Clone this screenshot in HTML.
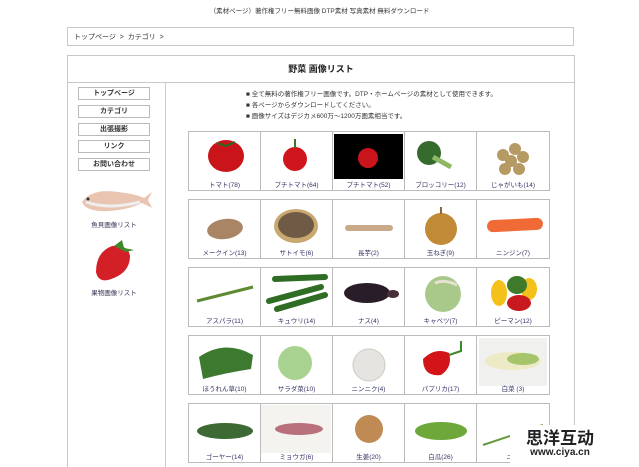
<!DOCTYPE html>
<html><head><meta charset="utf-8"><style>
*{margin:0;padding:0;box-sizing:border-box}
html,body{width:639px;height:467px;overflow:hidden}
body{background:#fff;position:relative;font-family:"Liberation Sans","Noto Sans CJK JP",sans-serif;color:#222}
.a{position:absolute}
.top{left:0;width:639px;top:5px;text-align:center;font-size:6.5px;color:#333}
.bc{left:67px;top:27px;width:507px;height:19px;border:1px solid #c8c8c8;font-size:7px;color:#333;padding:4px 0 0 6px}
.main{left:67px;top:55px;width:508px;height:420px;border:1px solid #c8c8c8}
.title{left:67px;top:55px;width:508px;height:28px;border-bottom:1px solid #c8c8c8;text-align:center;font-size:9px;font-weight:bold;line-height:28px}
.sep{left:165px;top:83px;width:1px;height:390px;background:#ccc}
.btn{left:78px;width:72px;height:13px;border:1px solid #bbb;font-size:7px;font-weight:bold;text-align:center;line-height:11px;color:#333}
.side{font-size:6.5px;color:#335;text-align:center;width:90px;left:69px}
.info{left:246px;font-size:6.5px;color:#333}
.tbl{left:188px;width:362px;height:60px;border:1px solid #bbb}
.c{position:absolute;top:0;height:58px;border-right:1px solid #bbb}
.c svg{position:absolute;left:0;top:1px}
.c span{position:absolute;bottom:1px;left:0;width:100%;text-align:center;font-size:6.5px;color:#336}
.wm{left:510px;top:425px;width:100px;height:42px;background:#fff}
</style></head><body>
<div class="a top">（素材ページ）著作権フリー無料画像 DTP素材 写真素材 無料ダウンロード</div>
<div class="a bc">トップページ &nbsp;&gt;&nbsp; カテゴリ &nbsp;&gt;</div>
<div class="a main"></div>
<div class="a title">野菜 画像リスト</div>
<div class="a sep"></div>
<div class="a btn" style="top:87px">トップページ</div>
<div class="a btn" style="top:105px">カテゴリ</div>
<div class="a btn" style="top:123px">出張撮影</div>
<div class="a btn" style="top:140px">リンク</div>
<div class="a btn" style="top:158px">お問い合わせ</div>
<svg class="a" style="left:78px;top:180px" width="76" height="40"><path d="M4 22 Q14 8 40 12 Q58 14 66 18 L74 12 L70 20 L74 28 L64 23 Q50 30 30 31 Q8 32 4 22Z" fill="#e9c4b0"/><path d="M8 22 Q30 30 62 22" stroke="#eee" stroke-width="3" fill="none"/><circle cx="10" cy="19" r="1.5" fill="#333"/></svg>
<div class="a side" style="top:219px">魚貝画像リスト</div>
<svg class="a" style="left:88px;top:238px" width="54" height="46"><path d="M24 8 Q40 6 42 18 Q42 36 20 42 Q10 44 8 34 Q8 14 24 8Z" fill="#d32027"/><path d="M26 8 L34 2 L36 10 L46 12 L38 14 Z" fill="#3c8a2a"/></svg>
<div class="a side" style="top:287px">果物画像リスト</div>
<div class="a info" style="top:88px">■ 全て無料の著作権フリー画像です。DTP・ホームページの素材として使用できます。</div>
<div class="a info" style="top:99px">■ 各ページからダウンロードしてください。</div>
<div class="a info" style="top:110px">■ 画像サイズはデジカメ600万〜1200万画素相当です。</div>

<div class="a tbl" style="top:131px">
<div class="c" style="left:0;width:72px"><svg width="72" height="50"><ellipse cx="37" cy="23" rx="18" ry="16" fill="#c9151a"/><path d="M28 10 L37 13 L46 9" stroke="#2a6a1e" stroke-width="2" fill="none"/></svg><span>トマト(78)</span></div>
<div class="c" style="left:72px;width:72px"><svg width="72" height="50"><circle cx="34" cy="26" r="12" fill="#d0161c"/><path d="M34 6 L34 15" stroke="#3a7a22" stroke-width="2"/></svg><span>プチトマト(64)</span></div>
<div class="c" style="left:144px;width:72px"><svg width="72" height="50"><rect x="1" y="1" width="69" height="45" fill="#000"/><circle cx="35" cy="25" r="10" fill="#c8141a"/></svg><span>プチトマト(52)</span></div>
<div class="c" style="left:216px;width:72px"><svg width="72" height="50"><circle cx="24" cy="20" r="12" fill="#356b2c"/><path d="M28 24 L46 34" stroke="#8fb864" stroke-width="5"/></svg><span>ブロッコリー(12)</span></div>
<div class="c" style="left:288px;width:73px"><svg width="72" height="50"><g fill="#b59b63"><circle cx="26" cy="22" r="6"/><circle cx="38" cy="16" r="6"/><circle cx="46" cy="24" r="6"/><circle cx="34" cy="28" r="6"/><circle cx="28" cy="36" r="6"/><circle cx="42" cy="36" r="6"/></g></svg><span>じゃがいも(14)</span></div>
</div>

<div class="a tbl" style="top:199px">
<div class="c" style="left:0;width:72px"><svg width="72" height="50"><ellipse cx="36" cy="28" rx="18" ry="10" fill="#a98465" transform="rotate(-8 36 28)"/></svg><span>メークイン(13)</span></div>
<div class="c" style="left:72px;width:72px"><svg width="72" height="50"><ellipse cx="35" cy="25" rx="22" ry="17" fill="#c9a870"/><ellipse cx="35" cy="24" rx="18" ry="13" fill="#6e5a45"/></svg><span>サトイモ(6)</span></div>
<div class="c" style="left:144px;width:72px"><svg width="72" height="50"><rect x="12" y="24" width="48" height="6" rx="3" fill="#caa989"/></svg><span>長芋(2)</span></div>
<div class="c" style="left:216px;width:72px"><svg width="72" height="50"><circle cx="36" cy="28" r="16" fill="#c08a36"/><path d="M36 6 L36 13" stroke="#8a6a30" stroke-width="2"/></svg><span>玉ねぎ(9)</span></div>
<div class="c" style="left:288px;width:73px"><svg width="72" height="50"><rect x="10" y="18" width="56" height="12" rx="6" fill="#f06a35" transform="rotate(-3 38 24)"/></svg><span>ニンジン(7)</span></div>
</div>

<div class="a tbl" style="top:267px">
<div class="c" style="left:0;width:72px"><svg width="72" height="50"><path d="M8 32 L64 18" stroke="#5e8a32" stroke-width="3"/></svg><span>アスパラ(11)</span></div>
<div class="c" style="left:72px;width:72px"><svg width="72" height="50"><g stroke="#2f6d24" stroke-width="6" stroke-linecap="round"><path d="M14 10 L64 8"/><path d="M8 32 L60 18"/><path d="M16 40 L64 26"/></g></svg><span>キュウリ(14)</span></div>
<div class="c" style="left:144px;width:72px"><svg width="72" height="50"><ellipse cx="34" cy="24" rx="23" ry="10" fill="#2a1d2a"/><ellipse cx="60" cy="25" rx="6" ry="4" fill="#4a2e3a"/></svg><span>ナス(4)</span></div>
<div class="c" style="left:216px;width:72px"><svg width="72" height="50"><circle cx="38" cy="25" r="18" fill="#a9c98a"/><path d="M30 14 Q40 10 52 16" stroke="#e8e0d0" stroke-width="3" fill="none"/></svg><span>キャベツ(7)</span></div>
<div class="c" style="left:288px;width:73px"><svg width="72" height="50"><ellipse cx="22" cy="24" rx="8" ry="13" fill="#f3c11a"/><ellipse cx="52" cy="20" rx="8" ry="11" fill="#f3c11a"/><ellipse cx="40" cy="16" rx="10" ry="9" fill="#3e7a2a"/><ellipse cx="42" cy="34" rx="12" ry="8" fill="#c8191e"/></svg><span>ピーマン(12)</span></div>
</div>

<div class="a tbl" style="top:335px">
<div class="c" style="left:0;width:72px"><svg width="72" height="50"><path d="M10 20 Q36 2 64 18 L62 32 Q36 36 14 42 Z" fill="#3d7a30"/></svg><span>ほうれん草(10)</span></div>
<div class="c" style="left:72px;width:72px"><svg width="72" height="50"><circle cx="34" cy="26" r="17" fill="#a8d290"/></svg><span>サラダ菜(10)</span></div>
<div class="c" style="left:144px;width:72px"><svg width="72" height="50"><circle cx="36" cy="28" r="16" fill="#e6e4e0" stroke="#cfcac2"/></svg><span>ニンニク(4)</span></div>
<div class="c" style="left:216px;width:72px"><svg width="72" height="50"><path d="M18 22 Q30 10 44 16 Q48 30 36 38 Q18 40 18 22Z" fill="#d3151a"/><path d="M44 18 L56 14 L56 4" stroke="#3e8a2a" stroke-width="2" fill="none"/></svg><span>パプリカ(17)</span></div>
<div class="c" style="left:288px;width:73px"><svg width="72" height="50"><rect x="2" y="1" width="68" height="48" fill="#f0f0ee"/><ellipse cx="36" cy="24" rx="28" ry="9" fill="#ecebc6"/><ellipse cx="46" cy="22" rx="16" ry="6" fill="#a6c46a"/></svg><span>白菜 (3)</span></div>
</div>

<div class="a tbl" style="top:403px">
<div class="c" style="left:0;width:72px"><svg width="72" height="50"><ellipse cx="36" cy="26" rx="28" ry="8" fill="#3d6a34"/></svg><span>ゴーヤー(14)</span></div>
<div class="c" style="left:72px;width:72px"><svg width="72" height="50"><rect x="0" y="0" width="70" height="48" fill="#f5f3f0"/><ellipse cx="38" cy="24" rx="24" ry="6" fill="#b8707a"/></svg><span>ミョウガ(6)</span></div>
<div class="c" style="left:144px;width:72px"><svg width="72" height="50"><ellipse cx="36" cy="24" rx="14" ry="14" fill="#c08a55"/></svg><span>生姜(20)</span></div>
<div class="c" style="left:216px;width:72px"><svg width="72" height="50"><ellipse cx="36" cy="26" rx="26" ry="9" fill="#6ea83a"/></svg><span>白瓜(26)</span></div>
<div class="c" style="left:288px;width:73px"><svg width="72" height="50"><path d="M6 40 L66 20" stroke="#6a9a40" stroke-width="2"/></svg><span>ニラ</span></div>
</div>

<div class="a wm"><div style="font-size:17px;font-weight:bold;text-align:center;line-height:20px;margin-top:2px;font-family:'Noto Sans CJK SC',sans-serif">思洋互动</div><div style="font-size:10px;font-weight:bold;text-align:center;line-height:12px">www.ciya.cn</div></div>
</body></html>
